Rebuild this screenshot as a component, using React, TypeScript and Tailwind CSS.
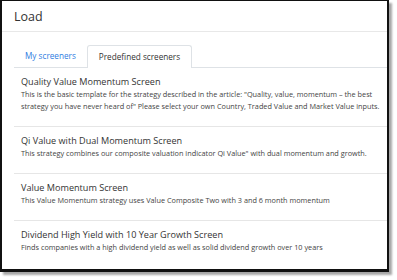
const screeners = [
  {
    title: 'Quality Value Momentum Screen',
    description:
      'This is the basic template for the strategy described in the article: "Quality, value, momentum – the best strategy you have never heard of" Please select your own Country, Traded Value and Market Value inputs.',
  },
  {
    title: 'Qi Value with Dual Momentum Screen',
    description: 'This strategy combines our composite valuation indicator Qi Value" with dual momentum and growth.',
  },
  {
    title: 'Value Momentum Screen',
    description: 'This Value Momentum strategy uses Value Composite Two with 3 and 6 month momentum',
  },
  {
    title: 'Dividend High Yield with 10 Year Growth Screen',
    description: 'Finds companies with a high dividend yield as well as solid dividend growth over 10 years',
  },
];

const App = () => {
  return (
    <div className="w-[397px] h-[280px] bg-white overflow-hidden" style={{ fontFamily: '"Open Sans", "Noto Sans", sans-serif' }}>
      <div className="w-[389px] h-[272px] bg-white border-l-2 border-t-[1.5px] border-r-2 border-b-[3px] border-[#111] shadow-[3px_3px_2px_rgba(0,0,0,0.35)] overflow-hidden flex flex-col">
        <div className="h-[31px] flex items-center pl-[12px] pt-[3px] border-b border-[#e8e8e8] shrink-0">
          <span className="text-[12.5px] text-[#333]">Load</span>
        </div>
        <div className="pl-[12px] pt-[13px] flex-1">
          <div className="flex border-b border-[#dee2e6] h-[23px]">
            <div className="px-[11px] flex items-center text-[8.2px] text-[#2f7de1]">My screeners</div>
            <div className="px-[11px] flex items-center text-[8.2px] text-[#333] border border-b-0 border-[#dee2e6] rounded-t-[3px] bg-white -mb-px">
              Predefined screeners
            </div>
          </div>
          <ul>
            {screeners.map((s) => (
              <li key={s.title} className="pl-[7px] pt-[7px] pb-[14px] border-b border-[#e6e6e6] last:border-b-0">
                <div className="text-[9.1px] leading-[13px] text-[#333]">{s.title}</div>
                <div className="text-[7.3px] leading-[12px] text-[#444]">{s.description}</div>
              </li>
            ))}
          </ul>
        </div>
      </div>
    </div>
  );
};

export default App;
